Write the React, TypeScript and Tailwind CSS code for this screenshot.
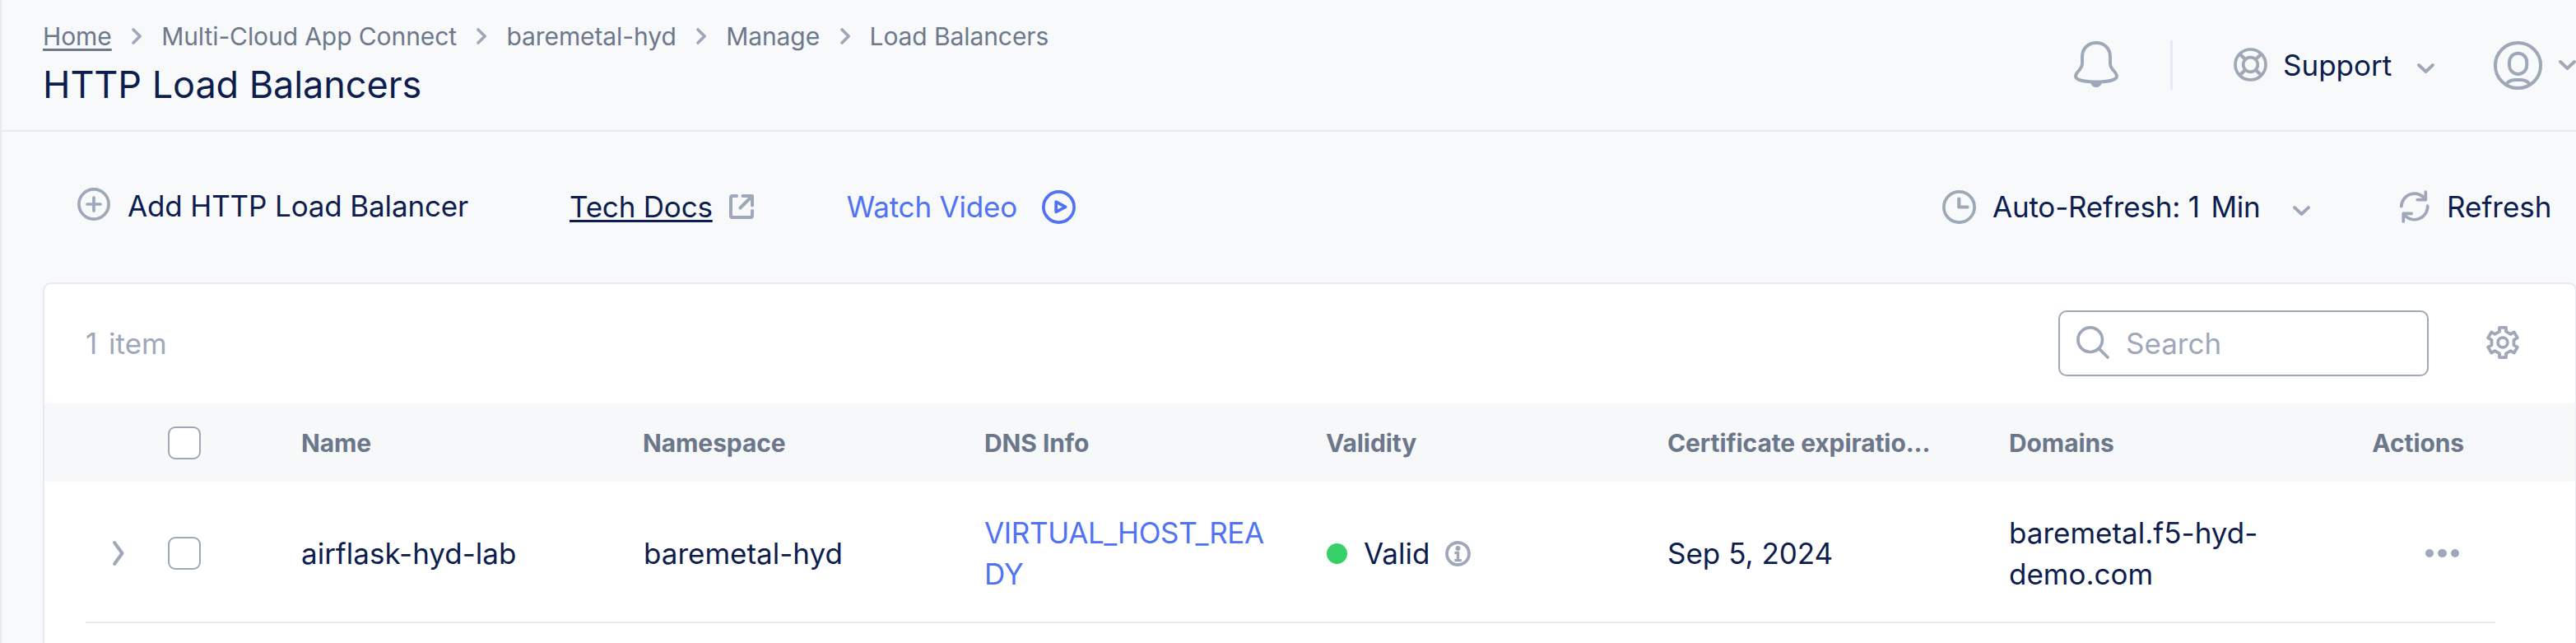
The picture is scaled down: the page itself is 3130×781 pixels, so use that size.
import type { ReactNode } from "react";

type IconProps = { w: number; h: number; className?: string; sw?: number; children: ReactNode };

function Icon({ w, h, className = "", sw = 3.7, children }: IconProps) {
  return (
    <svg
      width={w}
      height={h}
      viewBox={`0 0 ${w} ${h}`}
      fill="none"
      stroke="currentColor"
      strokeWidth={sw}
      strokeLinecap="round"
      strokeLinejoin="round"
      className={`shrink-0 overflow-visible text-[#9fa8b8] ${className}`}
    >
      {children}
    </svg>
  );
}

const ChevronRight = ({ className = "" }: { className?: string }) => (
  <Icon w={12} h={20} className={className}>
    <path d="M2 2 L10.2 10 L2 18" />
  </Icon>
);

const ChevronDown = ({ className = "" }: { className?: string }) => (
  <Icon w={21} h={12} sw={3.8} className={className}>
    <path d="M2 2 L10.5 10 L19 2" />
  </Icon>
);

const Bell = () => (
  <Icon w={54} h={56} sw={3.9} className="ml-auto -mt-[2px]">
    <path d="M27 2 C17 2 10 9 10 19 V27 C10 35 2 37 2 42.5 C2 47 12 49.5 27 49.5 C42 49.5 52 47 52 42.5 C52 37 44 35 44 27 V19 C44 9 37 2 27 2Z" />
    <path d="M20 50 H34 C33 54 30 56 27 56 S21 54 20 50Z" fill="currentColor" stroke="none" />
  </Icon>
);

const LifeRing = () => (
  <Icon w={41} h={41} className="ml-[74px] -mt-px">
    <circle cx="20.5" cy="20.5" r="18.5" />
    <circle cx="20.5" cy="20.5" r="8.8" />
    <path
      strokeLinecap="butt"
      strokeWidth="4.2"
      d="M14.3 14.3 L7.4 7.4 M26.7 14.3 L33.6 7.4 M14.3 26.7 L7.4 33.6 M26.7 26.7 L33.6 33.6"
    />
  </Icon>
);

const User = () => (
  <Icon w={59} h={59} sw={4} className="ml-[72px]">
    <circle cx="29.5" cy="29.5" r="27.6" />
    <rect x="19" y="14.7" width="21.2" height="25.2" rx="10.5" />
    <path d="M15 52.5 C18 48.5 22 47 26 47 H33 C37 47 41 48.5 44 52.5" />
  </Icon>
);

const PlusCircle = () => (
  <Icon w={40} h={40} className="-mt-[7px]">
    <circle cx="20" cy="20" r="18.1" />
    <path d="M20 12 V28 M12 20 H28" />
  </Icon>
);

const ExternalLink = () => (
  <Icon w={30} h={30} sw={4} className="ml-[20px] -mt-px">
    <path d="M9 2 H4 A2 2 0 0 0 2 4 V26 A2 2 0 0 0 4 28 H26 A2 2 0 0 0 28 26 V20" />
    <path d="M16.5 2 H28 V13.5 M28 2 L13.5 16.5" />
  </Icon>
);

const Play = () => (
  <Icon w={41} h={41} className="ml-[30px] -mt-px !text-[#4f73f2]">
    <circle cx="20.5" cy="20.5" r="18.6" />
    <path d="M17.2 14.2 L28.6 20.3 L17.2 26.4 Z" />
  </Icon>
);

const Clock = () => (
  <Icon w={41} h={41} className="ml-auto -mt-px">
    <circle cx="20.5" cy="20.5" r="18.6" />
    <path strokeWidth="4.2" d="M20.3 10.5 V20.5 H30.5" />
  </Icon>
);

const Sync = () => (
  <Icon w={36} h={40} className="-mt-px">
    <path d="M1.8 19.6 A16 16 0 0 1 31.3 11.6 M31.3 2 V11.6 H21.3" />
    <path d="M33.7 19.2 A16 16 0 0 1 4.2 28.3 M4.2 38 V28.3 H14.2" />
  </Icon>
);

const Magnifier = () => (
  <Icon w={40} h={40} className="-mt-[2px]">
    <circle cx="16.7" cy="16.7" r="14.8" />
    <path d="M27.5 27.5 L38 38" />
  </Icon>
);

const Gear = () => (
  <Icon w={40} h={40} sw={3.8} className="ml-[70px] -mt-[3px]">
    <path d="M16 1.9 H24 V6.7 L29.5 9.9 L33.8 7.4 L37.8 14.4 L33.5 16.8 V23.2 L37.8 25.6 L33.8 32.6 L29.5 30.1 L24 33.3 V38.1 H16 V33.3 L10.5 30.1 L6.2 32.6 L2.2 25.6 L6.5 23.2 V16.8 L2.2 14.4 L6.2 7.4 L10.5 9.9 L16 6.7 Z" />
    <circle cx="20" cy="20" r="5.9" />
  </Icon>
);

const Info = () => (
  <Icon w={31} h={31} sw={3.8} className="mt-px ml-[19px]">
    <circle cx="15.5" cy="15.5" r="13.5" />
    <circle cx="15.5" cy="9" r="3" fill="currentColor" stroke="none" />
    <path d="M11.4 14.4 H17.2 M15.5 13 V23.5 M11.4 23.6 H19.8" strokeWidth="3.4" strokeLinecap="butt" />
  </Icon>
);

const Checkbox = () => (
  <span className="block size-[40px] shrink-0 rounded-[9px] border-2 border-[#9fa8b6] bg-white" />
);

const crumbs = ["Multi-Cloud App Connect", "baremetal-hyd", "Manage", "Load Balancers"];
const heads = ["Name", "Namespace", "DNS Info", "Validity", "Certificate expiratio...", "Domains"];
const cols = "grid grid-cols-[312px_repeat(6,415px)_1fr]";

export default function App() {
  return (
    <div className="h-[781px] w-[3130px] overflow-hidden border-l-2 border-[#e6e8f2] bg-[#f7f9fb] font-[Inter,sans-serif] text-[35px] leading-[50px] font-normal whitespace-nowrap text-[#0d1d4d]">
      <header className="flex h-[160px] border-b-2 border-[#e6e8f2] pl-[50px]">
        <div className="pt-[26px]">
          <nav className="flex h-[36px] items-center text-[30px] leading-[36px] tracking-[-0.09px] text-[#6e788b]">
            <a className="underline decoration-[3px] underline-offset-[4px]">Home</a>
            {crumbs.map((c) => (
              <span key={c} className="flex items-center">
                <ChevronRight className="mr-[24px] ml-[24.5px]" />
                {c}
              </span>
            ))}
          </nav>
          <h1 className="mt-[13px] text-[45px] leading-[56px] tracking-[-0.06px]">HTTP Load Balancers</h1>
        </div>
        <div className="flex flex-1 items-center">
          <Bell />
          <span className="ml-[63px] h-[60px] w-[3px] bg-[#e6e8f2]" />
          <LifeRing />
          <span className="ml-[19px] w-[163px]">Support</span>
          <ChevronDown className="mt-[8px]" />
          <User />
          <ChevronDown className="ml-[20px]" />
        </div>
      </header>

      <div className="flex h-[183px] items-center pr-[29px] pl-[92px]">
        <PlusCircle />
        <span className="-mt-[3px] ml-[21px] w-[537px] tracking-[-0.14px]">Add HTTP Load Balancer</span>
        <a className="-mt-px tracking-[-0.2px] underline decoration-[3px] underline-offset-[3px]">Tech Docs</a>
        <ExternalLink />
        <a className="-mt-px ml-[113px] tracking-[-0.2px] text-[#4f73f2]">Watch Video</a>
        <Play />
        <Clock />
        <span className="-mt-px ml-[20px] w-[365px] tracking-[-0.2px]">
          Auto-Refresh: <span className="mr-[4px]">1</span> Min
        </span>
        <ChevronDown className="mt-[8px]" />
        <span className="w-[109px]" />
        <Sync />
        <span className="-mt-px ml-[21px] w-[128px]">Refresh</span>
      </div>

      <main className="ml-[50px] h-[460px] w-[3079px] rounded-t-[10px] border-2 border-[#e6e8f2] bg-white">
        <div className="flex h-[145px] items-center pr-[68px] pl-[50px] text-[#9fa8b8]">
          <span className="-mt-px">
            <span className="mr-[4px]">1</span> item
          </span>
          <label className="-mt-px ml-auto flex h-[80px] w-[450px] items-center rounded-[10px] border-2 border-[#9fa8b6] pl-[20px]">
            <Magnifier />
            <span className="ml-[20px]">Search</span>
          </label>
          <Gear />
        </div>

        <div className={`${cols} h-[95px] items-center bg-[#f6f8fa] pt-px text-[30px] leading-[36px] font-bold tracking-[-0.1px] text-[#6c778a]`}>
          <div className="pl-[150px]">
            <Checkbox />
          </div>
          {heads.map((h) => (
            <div key={h}>{h}</div>
          ))}
          <div className="pr-[135px] text-right">Actions</div>
        </div>

        <div className={`${cols} h-[170px] items-center pt-[4px]`}>
          <div className="flex items-center pl-[83px]">
            <Icon w={14} h={30} sw={4}>
              <path d="M2 2 L11.5 15 L2 28" />
            </Icon>
            <span className="w-[53px]" />
            <Checkbox />
          </div>
          <div>airflask-hyd-lab</div>
          <div className="pl-px">baremetal-hyd</div>
          <div className="text-[#4f73f2]">
            <span className="block tracking-[-0.38px]">VIRTUAL_HOST_REA</span>
            <span className="block">DY</span>
          </div>
          <div className="flex items-center pl-px">
            <span className="mt-px size-[25px] rounded-full bg-[#37d067]" />
            <span className="ml-[20px]">Valid</span>
            <Info />
          </div>
          <div>Sep 5, 2024</div>
          <div>
            <span className="block">baremetal.f5-hyd-</span>
            <span className="block">demo.com</span>
          </div>
          <div className="flex justify-end gap-[5px] pr-[141px]">
            <span className="size-[10.5px] rounded-full bg-[#9fa8b8]" />
            <span className="size-[10.5px] rounded-full bg-[#9fa8b8]" />
            <span className="size-[10.5px] rounded-full bg-[#9fa8b8]" />
          </div>
        </div>
        <div className="mr-[97px] ml-[50px] h-[2px] bg-[#e6e8f2]" />
      </main>
    </div>
  );
}
